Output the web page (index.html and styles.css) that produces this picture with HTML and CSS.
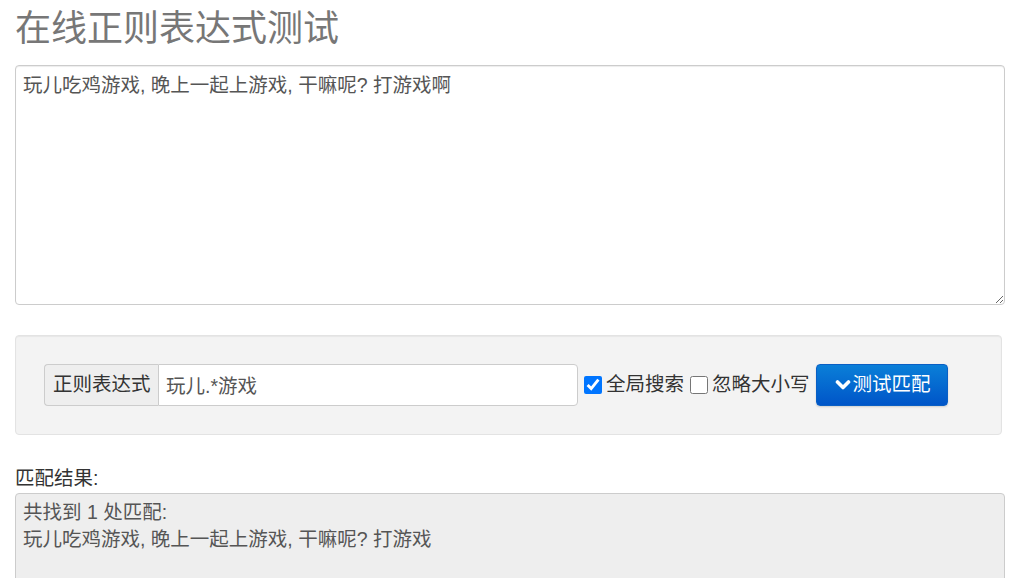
FILE: index.html
```html
<!DOCTYPE html>
<html lang="zh">
<head>
<meta charset="utf-8">
<title>在线正则表达式测试</title>
<link rel="stylesheet" href="styles.css">
</head>
<body>
<div class="container">
  <h1 class="title">在线正则表达式测试</h1>
  <textarea class="source">玩儿吃鸡游戏, 晚上一起上游戏, 干嘛呢? 打游戏啊</textarea>
  <div class="well">
    <div class="input-group">
      <span class="addon">正则表达式</span>
      <input class="regex" type="text" value="玩儿.*游戏">
    </div>
    <label class="check"><input type="checkbox" checked><span>全局搜索</span></label>
    <label class="check"><input type="checkbox"><span>忽略大小写</span></label>
    <button class="btn" type="button">
      <svg class="chev" width="16" height="12" viewBox="0 0 16 12"><polyline points="2.5,3 8,8.5 13.5,3" fill="none" stroke="#fff" stroke-width="3.6" stroke-linecap="round" stroke-linejoin="round"/></svg>
      <span>测试匹配</span>
    </button>
  </div>
  <div class="result-label">匹配结果:</div>
  <div class="result">共找到 1 处匹配:
玩儿吃鸡游戏, 晚上一起上游戏, 干嘛呢? 打游戏</div>
</div>
</body>
</html>
```

FILE: styles.css
```css
* { box-sizing: border-box; }
html, body {
  margin: 0;
  padding: 0;
  background: #fff;
}
body {
  font-family: "Liberation Sans", Arial, "Noto Sans CJK SC", sans-serif;
  font-size: 19.5px;
  line-height: 1.42857;
  color: #333;
  overflow: hidden;
}
.container {
  padding: 0 24px 0 15px;
  width: 1029px;
}
.title {
  font-size: 36px;
  font-weight: 400;
  line-height: 1.1;
  color: #777;
  margin: 9px 0 16px;
}
.source {
  display: block;
  width: 990px;
  height: 240px;
  margin: 0;
  padding: 6px 7px;
  font: inherit;
  color: #555;
  border: 1px solid #ccc;
  border-radius: 4px;
  resize: both;
  box-shadow: inset 0 1px 1px rgba(0,0,0,.075);
}
.well {
  margin-top: 30px;
  width: 987px;
  padding: 28px;
  background: #f3f3f3;
  border: 1px solid #e3e3e3;
  border-radius: 4px;
  box-shadow: inset 0 1px 1px rgba(0,0,0,.05);
  display: flex;
  align-items: center;
}
.input-group {
  display: flex;
  height: 42px;
  width: 534px;
}
.addon {
  display: flex;
  align-items: center;
  padding: 0 7px 0 8px;
  width: 114px;
  background: #eee;
  color: #333;
  border: 1px solid #ccc;
  border-right: 0;
  border-radius: 4px 0 0 4px;
  white-space: nowrap;
}
.regex {
  flex: 1;
  min-width: 0;
  height: 42px;
  padding: 0 7px;
  font: inherit;
  color: #555;
  border: 1px solid #ccc;
  border-radius: 0 4px 4px 0;
  background: #fff;
  outline: none;
}
.check {
  display: flex;
  align-items: center;
  margin-left: 6px;
  color: #333;
  white-space: nowrap;
}
.check input {
  width: 18px;
  height: 18px;
  margin: 0 4px 0 0;
  accent-color: #0075ff;
}
.check + .check { margin-left: 6px; }
.btn {
  margin-left: 6px;
  height: 42px;
  width: 132px;
  display: flex;
  align-items: center;
  justify-content: center;
  gap: 2px;
  padding: 0 12px 0 14px;
  font: inherit;
  color: #fff;
  border: 1px solid #0a5fc4;
  border-radius: 4px;
  background: linear-gradient(#0a7fd8, #0055c8);
  box-shadow: 0 1px 2px rgba(0,0,0,.15);
}
.chev { display: block; flex: none; }
.result-label {
  margin-top: 30px;
  line-height: 27px;
  color: #333;
}
.result {
  margin-top: 1px;
  width: 990px;
  height: 160px;
  padding: 5px 7px;
  background: #eee;
  color: #555;
  border: 1px solid #ccc;
  border-radius: 4px;
  white-space: pre-wrap;
  line-height: 27px;
}
```
